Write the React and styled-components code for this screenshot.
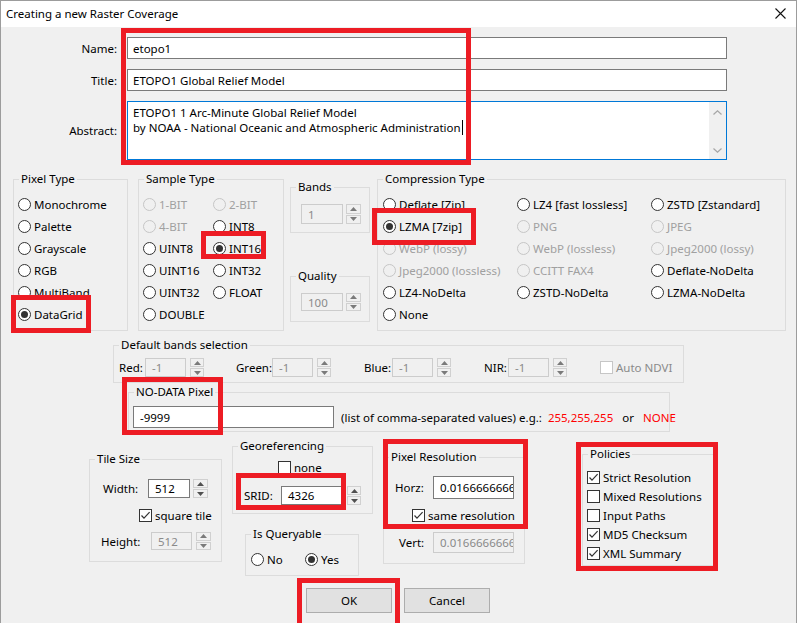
import React from 'react';
import styled, { createGlobalStyle } from 'styled-components';

const GlobalStyle = createGlobalStyle`
  html, body {
    margin: 0;
    padding: 0;
    background: #f0f0f0;
  }
  body {
    font-family: "Segoe UI", "Noto Sans", "Liberation Sans", sans-serif;
    font-size: 11.5px;
    color: #000;
  }
  * {
    box-sizing: border-box;
  }
`;

const BANDS = [
  { name: 'Red', box: 117, label: 26 },
  { name: 'Green', box: 128, label: 36 },
  { name: 'Blue', box: 120, label: 28 },
  { name: 'NIR', box: 116, label: 24 }
];

function App() {
  return (
    <>
      <GlobalStyle />
      <Window>
        <TitleBar>
          <span>Creating a new Raster Coverage</span>
          <CloseIcon />
        </TitleBar>

        <FormGrid>
          <FieldLabel>Name:</FieldLabel>
          <TextBox $h={22}>etopo1</TextBox>
          <FieldLabel>Title:</FieldLabel>
          <TextBox $h={22}>ETOPO1 Global Relief Model</TextBox>
          <FieldLabel>Abstract:</FieldLabel>
          <Memo>
            <div>ETOPO1 1 Arc-Minute Global Relief Model</div>
            <div>
              by NOAA - National Oceanic and Atmospheric Administration
              <Caret />
            </div>
            <MemoScroll>
              <Chevron up />
              <Chevron />
            </MemoScroll>
          </Memo>
        </FormGrid>

        <GroupRow>
          <Group $w={115} $h={152} $pt={13} $pl={4}>
            <Legend>Pixel Type</Legend>
            <RadioColumn>
              <Radio label="Monochrome" />
              <Radio label="Palette" />
              <Radio label="Grayscale" />
              <Radio label="RGB" />
              <Radio label="MultiBand" />
              <Radio label="DataGrid" checked />
            </RadioColumn>
          </Group>

          <Group $w={146} $h={152} $ml={10} $pt={13} $pl={4}>
            <Legend>Sample Type</Legend>
            <RadioGrid $col={70} $cols={2}>
              <Radio label="1-BIT" disabled />
              <Radio label="2-BIT" disabled />
              <Radio label="4-BIT" disabled />
              <Radio label="INT8" />
              <Radio label="UINT8" />
              <Radio label="INT16" checked />
              <Radio label="UINT16" />
              <Radio label="INT32" />
              <Radio label="UINT32" />
              <Radio label="FLOAT" />
              <Radio label="DOUBLE" />
            </RadioGrid>
          </Group>

          <StackColumn $ml={6}>
            <Group $w={80} $h={46} $mt={8} $pt={16} $pl={10}>
              <Legend>Bands</Legend>
              <Spin value="1" w={42} h={20} disabled />
            </Group>
            <Group $w={80} $h={46} $mt={43} $pt={16} $pl={10}>
              <Legend>Quality</Legend>
              <Spin value="100" w={42} h={18} disabled />
            </Group>
          </StackColumn>

          <Group $w={409} $h={152} $ml={7} $pt={13} $pl={5}>
            <Legend>Compression Type</Legend>
            <RadioGrid $col={134} $cols={3}>
              <Radio label="Deflate [Zip]" />
              <Radio label="LZ4 [fast lossless]" />
              <Radio label="ZSTD [Zstandard]" />
              <Radio label="LZMA [7zip]" checked />
              <Radio label="PNG" disabled />
              <Radio label="JPEG" disabled />
              <Radio label="WebP (lossy)" disabled />
              <Radio label="WebP (lossless)" disabled />
              <Radio label="Jpeg2000 (lossy)" disabled />
              <Radio label="Jpeg2000 (lossless)" disabled />
              <Radio label="CCITT FAX4" disabled />
              <Radio label="Deflate-NoDelta" />
              <Radio label="LZ4-NoDelta" />
              <Radio label="ZSTD-NoDelta" />
              <Radio label="LZMA-NoDelta" />
              <Radio label="None" />
            </RadioGrid>
          </Group>
        </GroupRow>

        <Group $w={571} $h={38} $mt={14} $ml={113} $pt={12} $pl={5}>
          <Legend>Default bands selection</Legend>
          <BandsRow>
            {BANDS.map((b) => (
              <BandField key={b.name} $w={b.box}>
                <RowLabel $w={b.label}>{b.name}:</RowLabel>
                <Spin value="-1" w={41} h={19} gap={4} bw={14} disabled />
              </BandField>
            ))}
            <Check label="Auto NDVI" disabled />
          </BandsRow>
        </Group>

        <Group $w={542} $h={40} $mt={9} $ml={128} $pt={13} $pl={4}>
          <Legend>NO-DATA Pixel</Legend>
          <NoDataRow>
            <TextBox $w={201} $h={22} $pad={6}>-9999</TextBox>
            <Hint>
              (list of comma-separated values) e.g.:
              <Sample>255,255,255</Sample>
              <Or>or</Or>
              <Sample>NONE</Sample>
            </Hint>
          </NoDataRow>
        </Group>

        <BottomRow>
          <Group $w={133} $h={103} $mt={27} $pt={19}>
            <Legend>Tile Size</Legend>
            <FieldRow $pl={13}>
              <RowLabel $w={45}>Width:</RowLabel>
              <Spin value="512" w={42} h={19} />
            </FieldRow>
            <CheckRow $pl={49} $mt={9}>
              <Check label="square tile" checked />
            </CheckRow>
            <FieldRow $pl={11} $mt={9}>
              <RowLabel $w={50}>Height:</RowLabel>
              <Spin value="512" w={41} h={18} gap={4} disabled />
            </FieldRow>
          </Group>

          <StackColumn $ml={10}>
            <Group $w={141} $h={68} $mt={14} $pt={12}>
              <Legend>Georeferencing</Legend>
              <CheckRow $pl={45}>
                <Check label="none" />
              </CheckRow>
              <FieldRow $pl={11} $mt={11}>
                <RowLabel $w={37}>SRID:</RowLabel>
                <Spin value="4326" w={62} h={19} gap={4} bw={14} />
              </FieldRow>
            </Group>
            <Group $w={114} $h={42} $mt={20} $ml={13} $pt={13} $pl={5}>
              <Legend>Is Queryable</Legend>
              <RadioLine>
                <Radio label="No" width={54} />
                <Radio label="Yes" checked />
              </RadioLine>
            </Group>
          </StackColumn>

          <Group $w={142} $h={107} $mt={25} $ml={10} $pt={18}>
            <Legend>Pixel Resolution</Legend>
            <FieldRow $pl={11}>
              <RowLabel $w={38}>Horz:</RowLabel>
              <TextBox $w={81} $h={23} $pad={6}>0.0166666666666667</TextBox>
            </FieldRow>
            <CheckRow $pl={28} $mt={8}>
              <Check label="same resolution" checked />
            </CheckRow>
            <FieldRow $pl={15} $mt={9}>
              <RowLabel $w={34}>Vert:</RowLabel>
              <TextBox $w={81} $h={21} $pad={6} $disabled>
                0.0166666666666667
              </TextBox>
            </FieldRow>
          </Group>

          <Group $w={132} $h={112} $mt={22} $ml={57} $pt={13} $pl={4}>
            <Legend>Policies</Legend>
            <PolicyList>
              <Check label="Strict Resolution" checked />
              <Check label="Mixed Resolutions" />
              <Check label="Input Paths" />
              <Check label="MD5 Checksum" checked />
              <Check label="XML Summary" checked />
            </PolicyList>
          </Group>
        </BottomRow>

        <ButtonRow>
          <Button>OK</Button>
          <Button>Cancel</Button>
        </ButtonRow>

        {/* red annotation frames drawn over the dialog */}
        <Mark $x={121} $y={28} $w={350} $h={137} />
        <Mark $x={11} $y={295} $w={80} $h={38} />
        <Mark $x={201} $y={231} $w={65} $h={28} />
        <Mark $x={372} $y={208} $w={104} $h={37} />
        <Mark $x={122} $y={377} $w={101} $h={58} />
        <Mark $x={236} $y={473} $w={110} $h={37} />
        <Mark $x={297} $y={578} $w={103} $h={52} />
        <Mark $x={383} $y={439} $w={145} $h={90} />
        <Mark $x={576} $y={442} $w={142} $h={129} />
      </Window>
    </>
  );
}

export default App;

function CloseIcon() {
  return (
    <svg width="11" height="11" viewBox="0 0 11 11">
      <path d="M0.5 0.5 L10.5 10.5 M10.5 0.5 L0.5 10.5" stroke="#111" strokeWidth="1.1" fill="none" />
    </svg>
  );
}

function Chevron({ up }) {
  return (
    <svg width="9" height="5" viewBox="0 0 9 5">
      <path
        d={up ? 'M0.5 4.5 L4.5 0.8 L8.5 4.5' : 'M0.5 0.5 L4.5 4.2 L8.5 0.5'}
        stroke="#a6a6a6"
        strokeWidth="1.2"
        fill="none"
      />
    </svg>
  );
}

function Radio({ label, checked, disabled, width }) {
  return (
    <RadioItem $disabled={disabled} $w={width}>
      <RadioDot $checked={checked} $disabled={disabled} />
      {label}
    </RadioItem>
  );
}

function Check({ label, checked, disabled }) {
  return (
    <CheckItem $disabled={disabled}>
      <CheckBox $disabled={disabled}>
        {checked && (
          <svg width="11" height="11" viewBox="0 0 11 11">
            <path d="M1.5 5.5 L4 8.2 L9.6 2.2" stroke="#333" strokeWidth="1.2" fill="none" />
          </svg>
        )}
      </CheckBox>
      {label}
    </CheckItem>
  );
}

function Arrow({ up, disabled }) {
  return (
    <svg width="7" height="4" viewBox="0 0 7 4">
      <path d={up ? 'M0 4 L3.5 0 L7 4 Z' : 'M0 0 L3.5 4 L7 0 Z'} fill={disabled ? '#7a7a7a' : '#505050'} />
    </svg>
  );
}

function Spin({ value, w, h, disabled, gap = 3, bw = 15 }) {
  return (
    <SpinWrap $gap={gap}>
      <TextBox $w={w} $h={h} $pad={6} $disabled={disabled}>
        {value}
      </TextBox>
      <SpinArrows $w={bw} $h={h}>
        <SpinHalf>
          <Arrow up disabled={disabled} />
        </SpinHalf>
        <SpinHalf>
          <Arrow disabled={disabled} />
        </SpinHalf>
      </SpinArrows>
    </SpinWrap>
  );
}

const Window = styled.div`
  position: relative;
  width: 797px;
  height: 623px;
  overflow: hidden;
  background: #f0f0f0;
  &::after {
    content: '';
    position: absolute;
    inset: 0 0 -1px 0;
    border: 1px solid #9c9c9c;
    pointer-events: none;
  }
`;

const TitleBar = styled.div`
  display: flex;
  align-items: center;
  justify-content: space-between;
  height: 27px;
  padding: 0 11px 0 6px;
  background: #fff;
`;

const FormGrid = styled.div`
  display: grid;
  grid-template-columns: 117px 600px;
  column-gap: 10px;
  row-gap: 10px;
  margin-top: 10px;
`;

const FieldLabel = styled.label`
  align-self: center;
  text-align: right;
`;

const TextBox = styled.div`
  display: flex;
  align-items: center;
  width: ${({ $w }) => ($w ? `${$w}px` : '100%')};
  height: ${({ $h }) => $h}px;
  padding: 0 ${({ $pad }) => $pad ?? 5}px;
  border: 1px solid ${({ $disabled }) => ($disabled ? '#cccccc' : '#7a7a7a')};
  background: ${({ $disabled }) => ($disabled ? '#f0f0f0' : '#fff')};
  color: ${({ $disabled }) => ($disabled ? '#8a8a8a' : '#000')};
  white-space: nowrap;
  overflow: hidden;
  flex: none;
`;

const Memo = styled.div`
  position: relative;
  height: 59px;
  padding: 3px 20px 0 5px;
  border: 1px solid #0078d7;
  background: #fff;
  line-height: 15px;
`;

const Caret = styled.span`
  display: inline-block;
  width: 1px;
  height: 15px;
  margin-left: 1px;
  vertical-align: top;
  background: #000;
`;

const MemoScroll = styled.div`
  position: absolute;
  top: 0;
  right: 0;
  bottom: 0;
  width: 17px;
  display: flex;
  flex-direction: column;
  justify-content: space-between;
  align-items: center;
  padding: 8px 0 6px;
  background: #f0f0f0;
`;

const GroupRow = styled.div`
  display: flex;
  align-items: flex-start;
  margin-top: 19px;
  padding-left: 13px;
`;

const StackColumn = styled.div`
  display: flex;
  flex-direction: column;
  align-items: flex-start;
  margin-left: ${({ $ml }) => $ml || 0}px;
`;

const Group = styled.div`
  position: relative;
  width: ${({ $w }) => $w}px;
  height: ${({ $h }) => $h}px;
  margin-top: ${({ $mt }) => $mt || 0}px;
  margin-left: ${({ $ml }) => $ml || 0}px;
  padding: ${({ $pt }) => $pt || 0}px 0 0 ${({ $pl }) => $pl || 0}px;
  border: 1px solid #dcdcdc;
  flex: none;
`;

const Legend = styled.span`
  position: absolute;
  top: -9px;
  left: 5px;
  padding: 0 2px;
  line-height: 16px;
  background: #f0f0f0;
  white-space: nowrap;
`;

const RadioColumn = styled.div`
  display: flex;
  flex-direction: column;
`;

const RadioGrid = styled.div`
  display: grid;
  grid-template-columns: repeat(${({ $cols }) => $cols}, ${({ $col }) => $col}px);
`;

const RadioLine = styled.div`
  display: flex;
`;

const RadioItem = styled.label`
  display: flex;
  align-items: center;
  gap: 3px;
  height: 22px;
  width: ${({ $w }) => ($w ? `${$w}px` : 'auto')};
  color: ${({ $disabled }) => ($disabled ? '#a0a0a0' : '#000')};
  white-space: nowrap;
`;

const RadioDot = styled.span`
  display: flex;
  align-items: center;
  justify-content: center;
  width: 13px;
  height: 13px;
  flex: none;
  border: 1px solid ${({ $disabled }) => ($disabled ? '#c6c6c6' : '#333')};
  border-radius: 50%;
  background: ${({ $disabled }) => ($disabled ? 'transparent' : '#fff')};
  &::after {
    content: '';
    display: ${({ $checked }) => ($checked ? 'block' : 'none')};
    width: 7px;
    height: 7px;
    border-radius: 50%;
    background: #333;
  }
`;

const CheckItem = styled.label`
  display: flex;
  align-items: center;
  gap: 3px;
  height: 19px;
  color: ${({ $disabled }) => ($disabled ? '#8a8a8a' : '#000')};
  white-space: nowrap;
`;

const CheckBox = styled.span`
  display: flex;
  align-items: center;
  justify-content: center;
  width: 13px;
  height: 13px;
  flex: none;
  border: 1px solid ${({ $disabled }) => ($disabled ? '#c6c6c6' : '#333')};
  background: #fff;
`;

const CheckRow = styled.div`
  display: flex;
  align-items: center;
  height: ${({ $h }) => $h || 16}px;
  margin-top: ${({ $mt }) => $mt || 0}px;
  padding-left: ${({ $pl }) => $pl || 0}px;
`;

const FieldRow = styled.div`
  display: flex;
  align-items: center;
  margin-top: ${({ $mt }) => $mt || 0}px;
  padding-left: ${({ $pl }) => $pl || 0}px;
`;

const RowLabel = styled.span`
  width: ${({ $w }) => $w}px;
  flex: none;
  white-space: nowrap;
`;

const SpinWrap = styled.div`
  display: flex;
  align-items: flex-start;
  gap: ${({ $gap }) => $gap}px;
`;

const SpinArrows = styled.div`
  display: flex;
  flex-direction: column;
  gap: 1px;
  width: ${({ $w }) => $w}px;
  height: ${({ $h }) => $h}px;
`;

const SpinHalf = styled.div`
  display: flex;
  align-items: center;
  justify-content: center;
  flex: 1;
  border: 1px solid #d0d0d0;
  background: #f0f0f0;
`;

const BandsRow = styled.div`
  display: flex;
  align-items: center;
  height: 19px;
`;

const BandField = styled.div`
  display: flex;
  align-items: center;
  width: ${({ $w }) => $w}px;
  flex: none;
`;

const NoDataRow = styled.div`
  display: flex;
  align-items: center;
  gap: 7px;
`;

const Hint = styled.span`
  white-space: nowrap;
`;

const Sample = styled.span`
  margin-left: 6px;
  color: #ff0000;
`;

const Or = styled.span`
  margin: 0 3px 0 9px;
`;

const BottomRow = styled.div`
  display: flex;
  align-items: flex-start;
  padding-left: 89px;
`;

const PolicyList = styled.div`
  display: flex;
  flex-direction: column;
`;

const ButtonRow = styled.div`
  display: flex;
  gap: 12px;
  margin-top: 12px;
  padding-left: 306px;
`;

const Button = styled.button`
  width: 86px;
  height: 25px;
  padding: 0;
  border: 1px solid #adadad;
  background: #e1e1e1;
  color: #000;
  font: inherit;
`;

const Mark = styled.div`
  position: absolute;
  left: ${({ $x }) => $x}px;
  top: ${({ $y }) => $y}px;
  width: ${({ $w }) => $w}px;
  height: ${({ $h }) => $h}px;
  border: 5px solid #ed1c24;
  pointer-events: none;
`;
